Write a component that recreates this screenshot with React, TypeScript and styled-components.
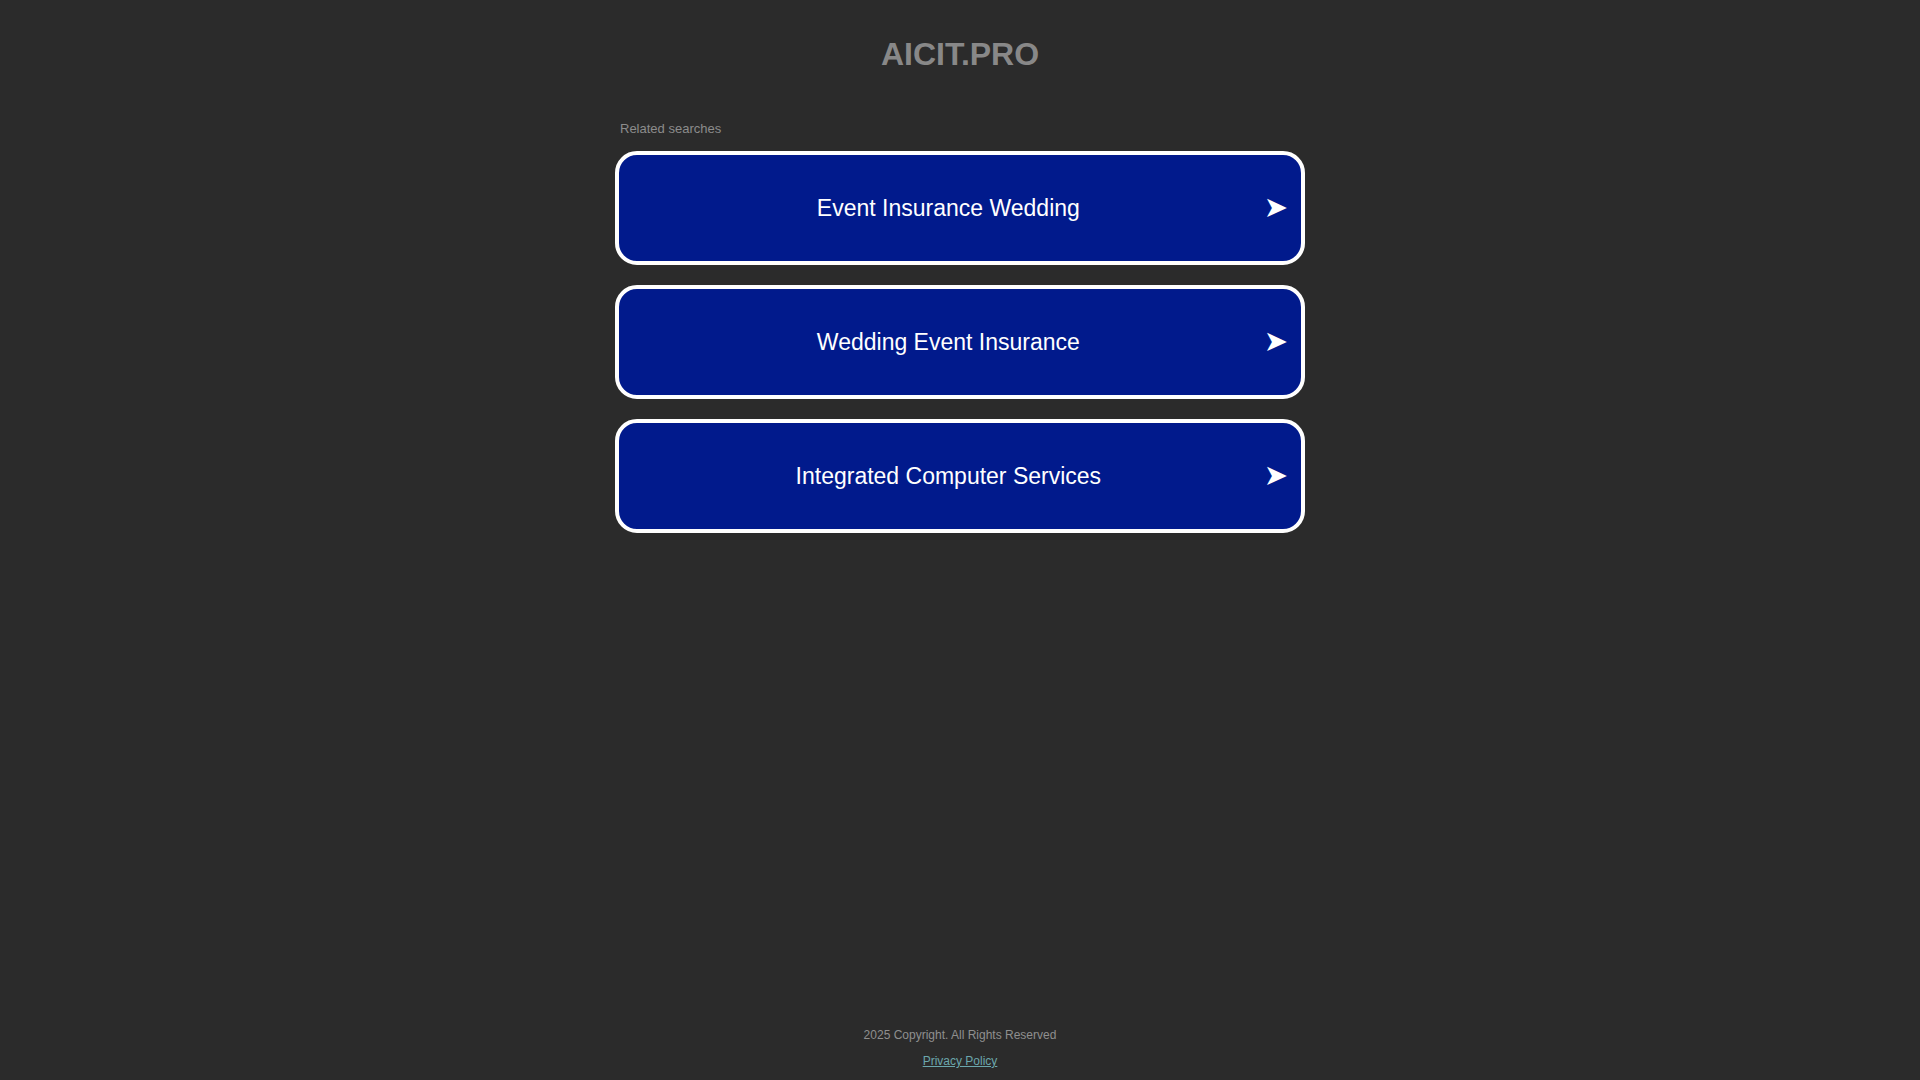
import React from 'react';
import styled, { createGlobalStyle } from 'styled-components';

const GlobalStyle = createGlobalStyle`
  html, body {
    margin: 0;
    padding: 0;
    background: #2b2b2b;
  }
  body {
    font-family: "Liberation Sans", Arial, sans-serif;
  }
`;

const Page = styled.div`
  display: flex;
  flex-direction: column;
  align-items: center;
  min-height: 100vh;
  box-sizing: border-box;
`;

const Domain = styled.h1`
  margin: 36px 0 0;
  font-size: 32px;
  font-weight: 700;
  color: #888888;
  line-height: normal;
`;

const Searches = styled.div`
  display: flex;
  flex-direction: column;
  width: 690px;
  margin-top: 48px;
`;

const Label = styled.div`
  font-size: 13px;
  color: #8c8c8c;
  padding-left: 5px;
  margin-bottom: 15px;
`;

const List = styled.div`
  display: flex;
  flex-direction: column;
  gap: 20px;
`;

const Card = styled.a`
  display: flex;
  align-items: center;
  height: 114px;
  box-sizing: border-box;
  border: 4px solid #ffffff;
  border-radius: 22px;
  background: #011a8c;
  padding: 1px 13px 0 14px;
  color: #ffffff;
  text-decoration: none;
  cursor: pointer;
`;

const CardText = styled.span`
  flex: 1;
  text-align: center;
  font-size: 23px;
`;

const Arrow = styled.span`
  font-family: "DejaVu Sans", sans-serif;
  font-size: 29px;
  line-height: 1;
  margin-top: -2px;
  color: #ffffff;
`;

const Footer = styled.footer`
  margin-top: auto;
  display: flex;
  flex-direction: column;
  align-items: center;
  gap: 12px;
  padding-bottom: 12px;
  font-size: 12px;
`;

const Copyright = styled.div`
  color: #8f8f8f;
`;

const PrivacyLink = styled.a`
  color: #6ba7ad;
  text-decoration: underline;
`;

const searches = [
  'Event Insurance Wedding',
  'Wedding Event Insurance',
  'Integrated Computer Services',
];

export default function App() {
  return (
    <>
      <GlobalStyle />
      <Page>
        <Domain>AICIT.PRO</Domain>
        <Searches>
          <Label>Related searches</Label>
          <List>
            {searches.map((s) => (
              <Card key={s} href="#">
                <CardText>{s}</CardText>
                <Arrow>➤</Arrow>
              </Card>
            ))}
          </List>
        </Searches>
        <Footer>
          <Copyright>2025 Copyright. All Rights Reserved</Copyright>
          <PrivacyLink href="#">Privacy Policy</PrivacyLink>
        </Footer>
      </Page>
    </>
  );
}
